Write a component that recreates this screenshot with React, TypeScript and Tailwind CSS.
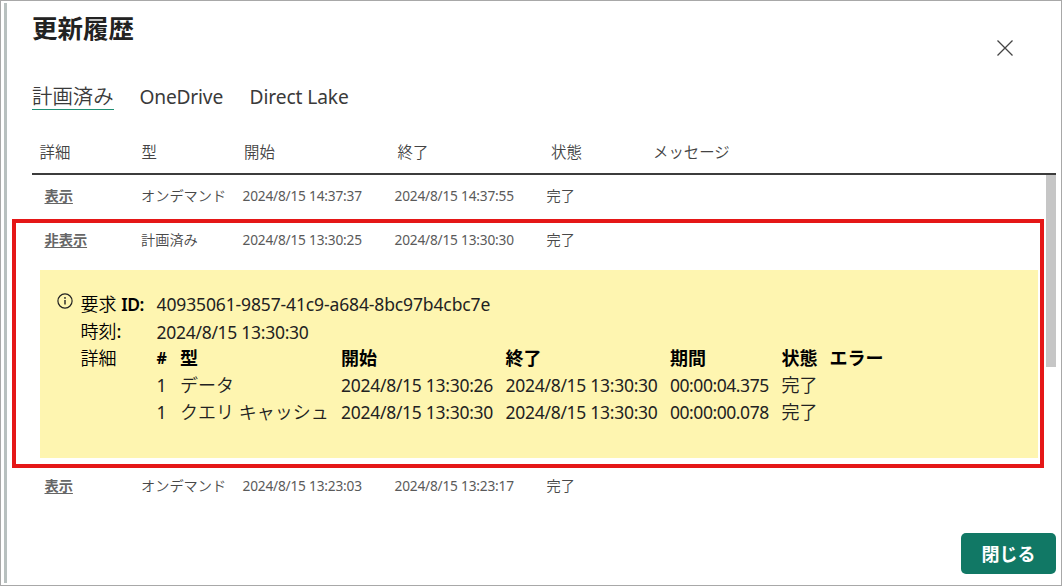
import React from "react";

const headerCells = ["詳細", "型", "開始", "終了", "状態", "メッセージ"];

type RowData = { action: string; type: string; start: string; end: string; status: string };

const rows: RowData[] = [
  { action: "表示", type: "オンデマンド", start: "2024/8/15 14:37:37", end: "2024/8/15 14:37:55", status: "完了" },
  { action: "非表示", type: "計画済み", start: "2024/8/15 13:30:25", end: "2024/8/15 13:30:30", status: "完了" },
  { action: "表示", type: "オンデマンド", start: "2024/8/15 13:23:03", end: "2024/8/15 13:23:17", status: "完了" },
];

function HistoryRow({ row }: { row: RowData }) {
  return (
    <div className="grid h-11 grid-cols-[96.5px_101.5px_152px_152px_1fr] items-center pb-[2px] pl-[12.5px] text-[14.2px] leading-[20px] text-[#484848]">
      <a className="text-[14.2px] font-bold text-[#666] underline decoration-1 underline-offset-2">{row.action}</a>
      <span>{row.type}</span>
      <span className="text-[13.7px] font-normal tracking-[-0.2px] text-[#5a5a5a]">{row.start}</span>
      <span className="text-[13.7px] font-normal tracking-[-0.2px] text-[#5a5a5a]">{row.end}</span>
      <span>{row.status}</span>
    </div>
  );
}

const steps = [
  { n: "1", type: "データ", start: "2024/8/15 13:30:26", end: "2024/8/15 13:30:30", duration: "00:00:04.375", status: "完了" },
  { n: "1", type: "クエリ キャッシュ", start: "2024/8/15 13:30:30", end: "2024/8/15 13:30:30", duration: "00:00:00.078", status: "完了" },
];

const stepGrid = "grid grid-cols-[23.5px_161px_164.5px_164.5px_111.5px_48px_1fr] whitespace-nowrap";

function DetailPanel() {
  return (
    <div className="mt-[7px] ml-[8px] flex h-[188px] w-[998px] bg-[#fef5b0] pt-[21px] pl-[17px] text-[18px] leading-[27px] text-[#222]">
      <svg className="mt-[2px] h-4 w-4 shrink-0" viewBox="0 0 16 16" fill="none" stroke="#222" strokeWidth="1.2">
        <circle cx="8" cy="8" r="7.1" />
        <path d="M8 7v4.4" strokeWidth="1.4" />
        <circle cx="8" cy="4.9" r="0.9" fill="#222" stroke="none" />
      </svg>
      <div className="ml-[7.5px] grid h-[134px] grid-cols-[76px_1fr] grid-rows-[27px_27px_26px_27px_27px]">
        <span className="text-black">要求 <span className="text-[17.5px] font-semibold tracking-[-0.5px]">ID:</span></span>
        <span className="text-[17.5px] font-normal tracking-[-0.13px]">40935061-9857-41c9-a684-8bc97b4cbc7e</span>
        <span className="text-black">時刻<span className="font-medium">:</span></span>
        <span className="pt-px text-[17.5px] font-normal tracking-[-0.28px]">2024/8/15 13:30:30</span>
        <span className="text-black">詳細</span>
        <div className={`${stepGrid} font-bold text-black`}>
          <span className="text-[16px]">#</span>
          <span>型</span>
          <span>開始</span>
          <span>終了</span>
          <span>期間</span>
          <span>状態</span>
          <span>エラー</span>
        </div>
        {steps.map((s) => (
          <div key={s.type} className={`col-start-2 pt-px ${stepGrid}`}>
            <span className="text-[17.5px] font-normal">{s.n}</span>
            <span>{s.type}</span>
            <span className="text-[17.5px] font-normal tracking-[-0.28px]">{s.start}</span>
            <span className="text-[17.5px] font-normal tracking-[-0.28px]">{s.end}</span>
            <span className="text-[17.5px] font-normal tracking-[-0.45px]">{s.duration}</span>
            <span>{s.status}</span>
          </div>
        ))}
      </div>
    </div>
  );
}

export default function App() {
  return (
    <div className="flex h-[586px] w-[1062px] overflow-hidden border border-[#a8a8a8] bg-white pt-[2px] pb-[2px] pl-[3px] font-['Noto_Sans','Noto_Sans_CJK_JP',sans-serif] font-[350] whitespace-nowrap">
      <div className="w-[3px] shrink-0 bg-[#b8c0bf]" />
      <main className="flex grow flex-col pr-[5px] pl-[25px]">
        <header className="flex h-[72px] justify-between">
          <h1 className="mt-[6px] text-[25.5px] leading-[38px] font-bold text-[#222]">更新履歴</h1>
          <button aria-label="閉じる" className="mt-[37px] mr-[43px] h-4 w-4">
            <svg viewBox="0 0 16 16" className="h-4 w-4" fill="none" stroke="#444" strokeWidth="1.3">
              <path d="M0.5 0.5l15 15M15.5 0.5l-15 15" />
            </svg>
          </button>
        </header>
        <nav className="flex h-[58px] items-start pt-[8px] text-[19.2px] leading-[28px] font-normal text-[#3a3a3a]">
          <a className="h-[27px] w-[82px] border-b border-b-[#1f8f74] text-[20.4px] leading-[26px] font-[350]">計画済み</a>
          <a className="ml-[25.5px] w-[85px] tracking-[-0.2px]">OneDrive</a>
          <a className="ml-[25px] tracking-[-0.1px]">Direct Lake</a>
        </nav>
        <div className="grid h-[42px] w-[1024px] grid-cols-[102px_102.5px_153.5px_153.5px_102px_1fr] items-center border-b-2 border-[#3c3c3c] pl-[7.5px] text-[15.4px] text-[#444]">
          {headerCells.map((c) => (
            <span key={c} className="leading-[22px]">{c}</span>
          ))}
        </div>
        <section className="relative flex h-[334px] w-[1024px] justify-between">
          <div className="w-[1010px]">
            <HistoryRow row={rows[0]} />
            <HistoryRow row={rows[1]} />
            <DetailPanel />
            <div className="mt-[7px]">
              <HistoryRow row={rows[2]} />
            </div>
          </div>
          <div className="h-[192px] w-[10px] bg-[#c6c6c6]" />
          <div className="pointer-events-none absolute top-[44px] left-[-20px] h-[249px] w-[1032px] border-4 border-[#e51717]" />
        </section>
        <footer className="flex h-[65px] w-[1024px] justify-end pt-[24px]">
          <button className="h-[41px] w-[95px] rounded-[5px] bg-[#117865] pt-px text-[18px] font-bold text-white">閉じる</button>
        </footer>
      </main>
    </div>
  );
}
